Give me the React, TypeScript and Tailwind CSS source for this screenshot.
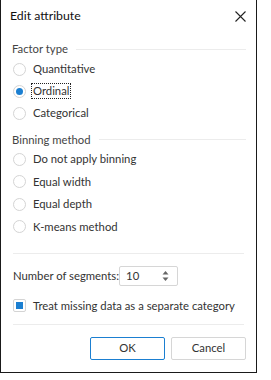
import React from "react";

const font = { fontFamily: "Lato, 'Noto Sans', sans-serif" };

function Radio({ label, checked, focus, h }: { label: string; checked?: boolean; focus?: boolean; h: string }) {
  return (
    <div className={`flex items-center ${h}`}>
      <div className="ml-[12px] w-[13px] h-[13px] rounded-full border border-[#d4d4d4] bg-white flex items-center justify-center">
        {checked && <div className="w-[7px] h-[7px] rounded-full bg-[#1b7fd1]" />}
      </div>
      <span className={`ml-[6px] text-[11.3px] text-[#333] leading-[14px] px-[1px] ${focus ? "outline outline-1 outline-dotted outline-[#222]" : ""}`}>
        {label}
      </span>
    </div>
  );
}

function Legend({ label, h }: { label: string; h: string }) {
  return (
    <div className={`flex items-center ${h} pl-[11px] pr-[10px]`}>
      <span className="text-[11.3px] text-[#444] leading-[14px]">{label}</span>
      <div className="flex-1 ml-[8px] h-px bg-[#ececec]" />
    </div>
  );
}

export default function App() {
  return (
    <div className="w-[271px] h-[380px] bg-white" style={font}>
      <div className="w-[257px] h-[373px] border-l border-r border-b border-[#1a1a1a] flex flex-col">
        <div className="h-[32px] flex items-center justify-between pl-[9px] pr-[10px]">
          <span className="text-[12.3px] text-[#111] leading-[16px]">Edit attribute</span>
          <svg width="11" height="11" viewBox="0 0 11 11">
            <path d="M0.5 0.5 L10.5 10.5 M10.5 0.5 L0.5 10.5" stroke="#222" strokeWidth="1.1" />
          </svg>
        </div>
        <div className="h-[8px]" />
        <Legend label="Factor type" h="h-[18px]" />
        <Radio label="Quantitative" h="h-[22px]" />
        <Radio label="Ordinal" checked focus h="h-[22px]" />
        <Radio label="Categorical" h="h-[22px]" />
        <div className="h-[7px]" />
        <Legend label="Binning method" h="h-[17px]" />
        <Radio label="Do not apply binning" h="h-[22px]" />
        <Radio label="Equal width" h="h-[23px]" />
        <Radio label="Equal depth" h="h-[22px]" />
        <Radio label="K-means method" h="h-[23px]" />
        <div className="h-[15px]" />
        <div className="mx-[12px] h-px bg-[#ececec]" />
        <div className="h-[12px]" />
        <div className="flex items-center h-[20px] pl-[12px]">
          <span className="text-[11.3px] text-[#333] leading-[14px] whitespace-nowrap">Number of segments:</span>
          <div className="ml-auto mr-[78px] w-[60px] h-[20px] border border-[#d6d6d6] rounded-[2px] flex items-center pl-[6px] pr-[8px]">
            <span className="text-[11.3px] text-[#333] leading-[14px] flex-1">10</span>
            <svg width="7" height="12" viewBox="0 0 7 12">
              <path d="M3.5 1 L6.5 4.5 L0.5 4.5 Z" fill="#666" />
              <path d="M3.5 11 L6.5 7.5 L0.5 7.5 Z" fill="#666" />
            </svg>
          </div>
        </div>
        <div className="h-[12px]" />
        <div className="flex items-center h-[15px]">
          <div className="ml-[12px] w-[13px] h-[13px] border border-[#d4d4d4] rounded-[2px] flex items-center justify-center bg-white">
            <div className="w-[7px] h-[7px] bg-[#1b7fd1]" />
          </div>
          <span className="ml-[7px] text-[11.3px] text-[#333] leading-[14px] whitespace-nowrap">Treat missing data as a separate category</span>
        </div>
        <div className="h-[11px]" />
        <div className="mx-[12px] h-px bg-[#ececec]" />
        <div className="h-[12px]" />
        <div className="flex justify-end gap-[6px] pr-[10px]">
          <button className="w-[75px] h-[23px] border border-[#1b7fd1] rounded-[2px] text-[11.3px] text-[#333] bg-white">OK</button>
          <button className="w-[75px] h-[23px] border border-[#d6d6d6] rounded-[2px] text-[11.3px] text-[#333] bg-white">Cancel</button>
        </div>
      </div>
    </div>
  );
}
